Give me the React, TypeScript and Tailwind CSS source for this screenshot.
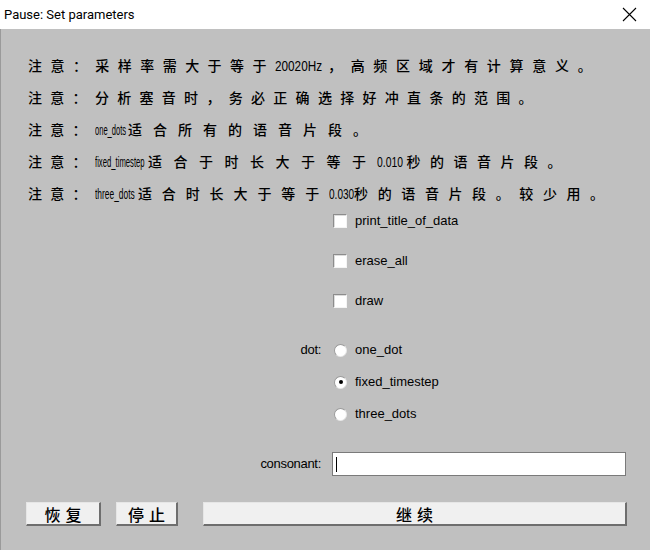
import React from "react";

const CJK = "'Noto Sans CJK SC', 'Noto Sans', sans-serif";
const LAT = "'Liberation Sans', Arial, sans-serif";

function C({ t, tr }: { t: string; tr: number }) {
  return (
    <span className="text-[14px] font-medium" style={{ fontFamily: CJK, letterSpacing: tr }}>
      {t}
    </span>
  );
}

function L({ t, w, s }: { t: string; w: number; s: number }) {
  return (
    <span className="inline-block whitespace-nowrap align-baseline" style={{ width: w }}>
      <span
        className="inline-block origin-left text-[14px]"
        style={{ fontFamily: LAT, transform: `scaleX(${s})` }}
      >
        {t}
      </span>
    </span>
  );
}

function Check({ label }: { label: string }) {
  return (
    <div className="flex h-[24px] items-center">
      <div className="w-[332px]" />
      <div className="h-[14px] w-[14px] border border-t-[#8c8c8c] border-l-[#8c8c8c] border-r-[#f4f4f4] border-b-[#f4f4f4] bg-white shadow-[inset_1px_1px_0_#dcdcdc]" />
      <span className="ml-[8px] text-[13px] text-black" style={{ fontFamily: LAT }}>
        {label}
      </span>
    </div>
  );
}

function Radio({ label, checked, left }: { label: string; checked?: boolean; left?: string }) {
  return (
    <div className="flex h-[24px] items-center">
      <div className="w-[320px] text-right text-[13px] tracking-[-0.3px]" style={{ fontFamily: LAT }}>
        {left ?? ""}
      </div>
      <div className="ml-[13px] flex h-[13px] w-[13px] items-center justify-center rounded-full border border-t-[#9a9a9a] border-l-[#9a9a9a] border-r-[#e8e8e8] border-b-[#e8e8e8] bg-white">
        {checked && <div className="h-[4px] w-[4px] rounded-full bg-black" />}
      </div>
      <span className="ml-[8px] text-[13px] text-black" style={{ fontFamily: LAT }}>
        {label}
      </span>
    </div>
  );
}

function Btn({ text, w, ml }: { text: string; w: string; ml?: string }) {
  return (
    <div
      className={`flex h-[24px] items-center justify-center border-t border-l border-r-2 border-b-2 border-t-[#e6e6e6] border-l-[#e6e6e6] border-r-[#6e6e6e] border-b-[#6e6e6e] bg-[#f0f0f0] text-[16px] font-medium tracking-[5px] text-black ${w} ${ml ?? ""}`}
      style={{ fontFamily: CJK }}
    >
      <span className="pl-[5px]">{text}</span>
    </div>
  );
}

export default function App() {
  return (
    <div className="flex h-[550px] w-[650px] flex-col overflow-hidden bg-white">
      <div className="relative flex h-[29px] shrink-0 items-center bg-white pl-[4px]">
        <span className="text-[13px] text-black" style={{ fontFamily: "Roboto, sans-serif" }}>
          Pause: Set parameters
        </span>
        <svg className="absolute left-[622px] top-[7px]" width="15" height="15" viewBox="0 0 15 15">
          <path d="M1 1 L14 14 M14 1 L1 14" stroke="#000" strokeWidth="1.1" fill="none" />
        </svg>
      </div>
      <div className="flex flex-1 flex-col border-l border-[#9a9a9a] bg-[#c0c0c0]">
        <div className="flex flex-col pl-[27px] pt-[20px] text-black">
          <div className="h-[32px] whitespace-nowrap leading-[32px]">
            <C t="注意：采样率需大于等于" tr={8.45} />
            <L t="20020Hz" w={53} s={0.84} />
            <C t="，高频区域才有计算意义。" tr={8.7} />
          </div>
          <div className="h-[32px] whitespace-nowrap leading-[32px]">
            <C t="注意：分析塞音时，务必正确选择好冲直条的范围。" tr={8.3} />
          </div>
          <div className="h-[32px] whitespace-nowrap leading-[32px]">
            <C t="注意：" tr={8.3} />
            <L t="one_dots" w={33} s={0.54} />
            <C t="适合所有的语音片段。" tr={11} />
          </div>
          <div className="h-[32px] whitespace-nowrap leading-[32px]">
            <C t="注意：" tr={8.3} />
            <L t="fixed_timestep" w={53} s={0.55} />
            <C t="适合于时长大于等于" tr={11.5} />
            <L t="0.010" w={29} s={0.74} />
            <C t="秒的语音片段。" tr={9.5} />
          </div>
          <div className="h-[32px] whitespace-nowrap leading-[32px]">
            <C t="注意：" tr={8.3} />
            <L t="three_dots" w={43} s={0.6} />
            <C t="适合时长大于等于" tr={9.9} />
            <L t="0.030" w={25} s={0.72} />
            <C t="秒的语音片段。较少用。" tr={9.6} />
          </div>
        </div>
        <div className="flex flex-col">
          <Check label="print_title_of_data" />
          <div className="mt-[16px]">
            <Check label="erase_all" />
          </div>
          <div className="mt-[16px]">
            <Check label="draw" />
          </div>
          <div className="mt-[25px]">
            <Radio left="dot:" label="one_dot" />
          </div>
          <div className="mt-[8px]">
            <Radio label="fixed_timestep" checked />
          </div>
          <div className="mt-[8px]">
            <Radio label="three_dots" />
          </div>
          <div className="mt-[26px] flex h-[24px] items-center">
            <div className="w-[320px] text-right text-[13px] tracking-[-0.3px]" style={{ fontFamily: LAT }}>
              consonant:
            </div>
            <div className="ml-[11px] flex h-[24px] w-[294px] items-center border border-[#7a7a7a] bg-white pl-[3px]">
              <div className="h-[15px] w-[1px] bg-black" />
            </div>
          </div>
          <div className="mt-[26px] flex h-[24px] items-center pl-[25px]">
            <Btn text="恢复" w="w-[75px]" />
            <Btn text="停止" w="w-[62px]" ml="ml-[15px]" />
            <Btn text="继续" w="w-[424px]" ml="ml-[25px]" />
          </div>
        </div>
      </div>
    </div>
  );
}
